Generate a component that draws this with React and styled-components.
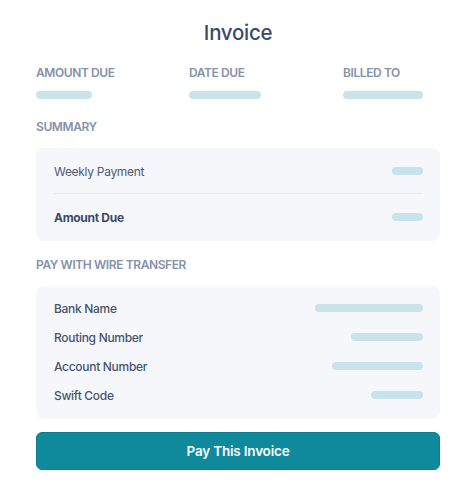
import React from "react";
import styled, { createGlobalStyle } from "styled-components";

const GlobalStyle = createGlobalStyle`
  body {
    margin: 0;
    background: #ffffff;
    font-family: Inter, "Noto Sans", sans-serif;
  }
`;

const Page = styled.div`
  width: 404px;
  padding: 19px 36px 0 36px;
  display: flex;
  flex-direction: column;
`;

const Title = styled.h1`
  margin: 0;
  font-size: 20.5px;
  line-height: 28px;
  font-weight: 500;
  color: #3b4a6b;
  text-align: center;
  letter-spacing: -0.3px;
`;

const InfoGrid = styled.div`
  display: grid;
  grid-template-columns: 153px 154px 1fr;
  margin-top: 18px;
`;

const InfoCol = styled.div`
  display: flex;
  flex-direction: column;
  gap: 10px;
`;

const Label = styled.div`
  font-size: 12px;
  line-height: 16px;
  font-weight: 600;
  color: #8591a9;
  text-transform: uppercase;
  letter-spacing: -0.4px;
  margin-top: ${(p) => p.$top || 0}px;
`;

const Bar = styled.div`
  width: ${(p) => p.$w}px;
  height: 8px;
  border-radius: 4px;
  background: #c8e3ea;
  flex-shrink: 0;
`;

const Card = styled.div`
  margin-top: 13px;
  background: #f5f7fb;
  border-radius: 8px;
  padding: ${(p) => p.$pad};
  display: flex;
  flex-direction: column;
  gap: ${(p) => p.$gap || 0}px;
`;

const Row = styled.div`
  height: 22px;
  display: flex;
  align-items: center;
  justify-content: space-between;
`;

const RowText = styled.span`
  font-size: 12px;
  letter-spacing: -0.3px;
  font-weight: ${(p) => p.$weight || 400};
  color: ${(p) => p.$color || "#4d5a78"};
`;

const Divider = styled.div`
  height: 1px;
  background: #e6e9f1;
  margin: 11px 0 12px 0;
`;

const PayButton = styled.button`
  margin-top: 13px;
  height: 38px;
  border: 1px solid #0b7f90;
  border-radius: 6px;
  background: #0e8a9c;
  color: #ffffff;
  font-family: Inter, "Noto Sans", sans-serif;
  font-size: 13.5px;
  font-weight: 600;
  letter-spacing: -0.2px;
  cursor: pointer;
`;

const info = [
  { label: "Amount Due", w: 56 },
  { label: "Date Due", w: 72 },
  { label: "Billed To", w: 80 },
];

const wire = [
  { label: "Bank Name", w: 108 },
  { label: "Routing Number", w: 72 },
  { label: "Account Number", w: 91 },
  { label: "Swift Code", w: 52 },
];

export default function App() {
  return (
    <>
      <GlobalStyle />
      <Page>
        <Title>Invoice</Title>
        <InfoGrid>
          {info.map((i) => (
            <InfoCol key={i.label}>
              <Label>{i.label}</Label>
              <Bar $w={i.w} />
            </InfoCol>
          ))}
        </InfoGrid>

        <Label $top={20}>Summary</Label>
        <Card $pad="12px 17px 13px 18px">
          <Row>
            <RowText>Weekly Payment</RowText>
            <Bar $w={31} />
          </Row>
          <Divider />
          <Row>
            <RowText $weight={700} $color="#3b4a6b">
              Amount Due
            </RowText>
            <Bar $w={31} />
          </Row>
        </Card>

        <Label $top={16}>Pay with wire transfer</Label>
        <Card $pad="11px 17px 13px 18px" $gap={7}>
          {wire.map((r) => (
            <Row key={r.label}>
              <RowText $weight={500} $color="#46546f">
                {r.label}
              </RowText>
              <Bar $w={r.w} />
            </Row>
          ))}
        </Card>

        <PayButton>Pay This Invoice</PayButton>
      </Page>
    </>
  );
}
